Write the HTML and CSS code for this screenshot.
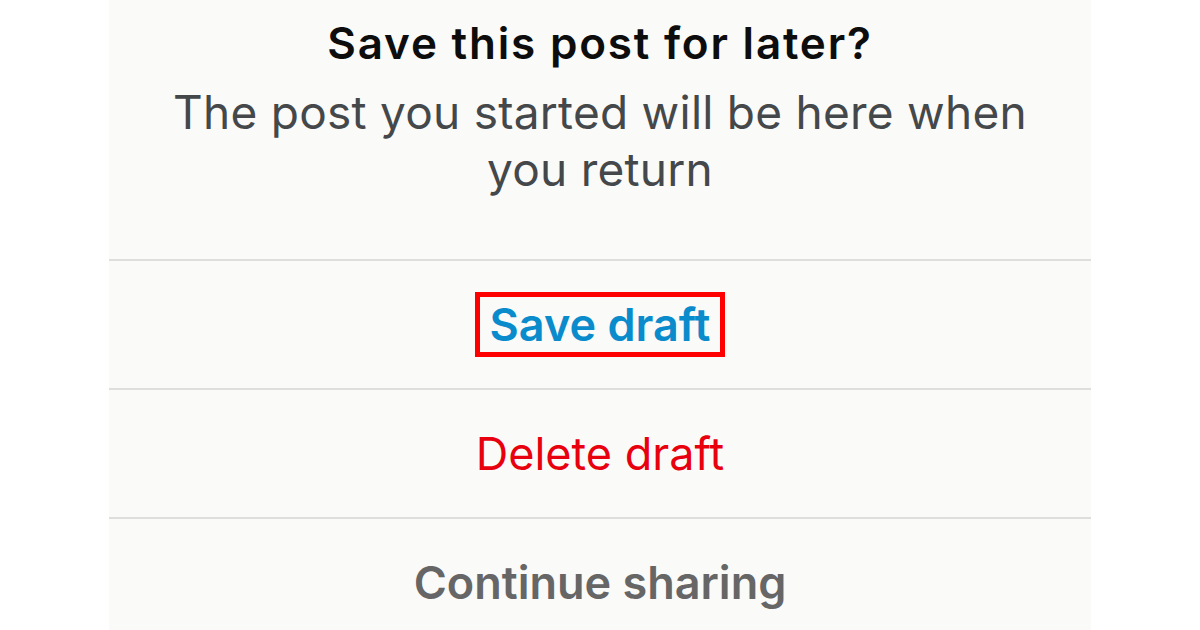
FILE: index.html
```html
<!DOCTYPE html>
<html lang="en">
<head>
    <meta charset="UTF-8">
    <meta name="viewport" content="width=device-width, initial-scale=1.0">
    <title>Save this post for later?</title>
    <link rel="stylesheet" href="styles.css">
</head>
<body>
    <main class="sheet">
        <header class="head">
            <h1 class="titulo">Save this post for later?</h1>
            <p class="texto">The post you started will be here when you return</p>
        </header>
        <div class="fila">
            <button class="accion guardar">Save draft</button>
        </div>
        <div class="fila">
            <button class="accion borrar">Delete draft</button>
        </div>
        <div class="fila">
            <button class="accion seguir">Continue sharing</button>
        </div>
    </main>
</body>
</html>
```

FILE: styles.css
```css
/* Estilos generales */
body {
    margin: 0;
    padding: 0;
    background-color: #ffffff;
    font-family: 'Inter', 'Roboto', sans-serif;
}

.sheet {
    width: 982px;
    height: 630px;
    margin: 0 auto;
    background-color: #fafaf8;
    overflow: hidden;
}

.head {
    height: 259px;
    padding-top: 17px;
    box-sizing: border-box;
    text-align: center;
}

.titulo {
    font-size: 44px;
    font-weight: 600;
    color: #0d0d0d;
    margin: 0;
    line-height: 52px;
    letter-spacing: 1.8px;
}

.texto {
    font-size: 46px;
    color: #45484a;
    margin: 15px auto 0;
    width: 880px;
    line-height: 57px;
    letter-spacing: 0.25px;
}

.fila {
    height: 127px;
    border-top: 2px solid #dededc;
    display: flex;
    align-items: center;
    justify-content: center;
}

.accion {
    font-family: inherit;
    font-size: 45px;
    line-height: 55px;
    background: none;
    border: none;
    padding: 0;
    cursor: pointer;
}

.guardar {
    color: #0a8bcc;
    font-weight: 600;
    border: 5px solid #ff0000;
    padding: 0 10px;
}

.borrar {
    color: #e8000e;
    font-weight: 400;
}

.seguir {
    color: #666666;
    font-weight: 600;
}
```
